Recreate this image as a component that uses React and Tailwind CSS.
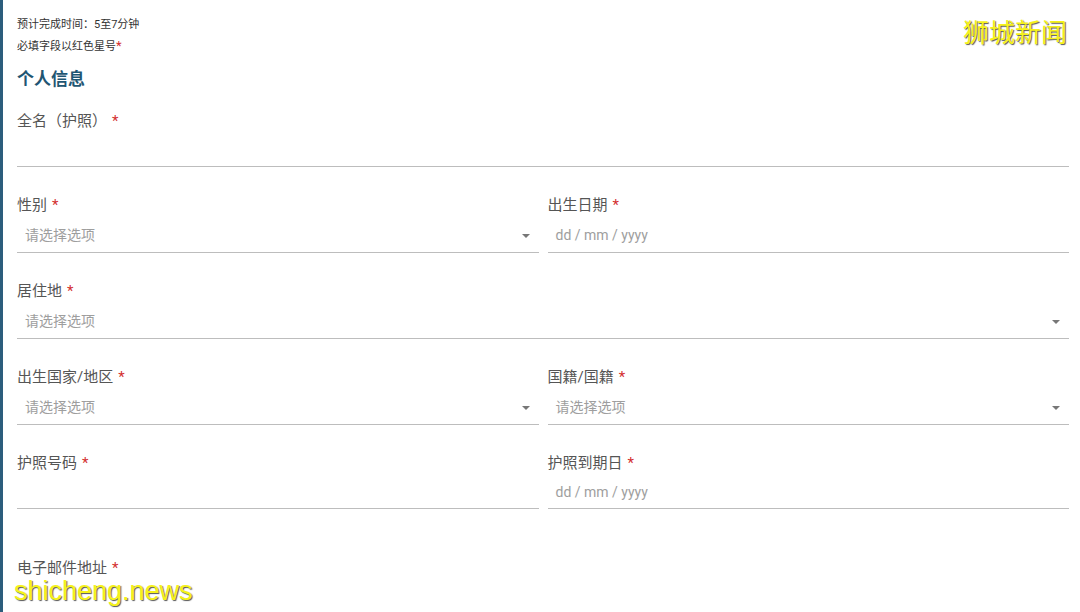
import React from 'react';

const font = { fontFamily: 'Roboto, "Noto Sans CJK SC", sans-serif' };

const Star = () => <span className="text-[#d32f2f] ml-[5px]">*</span>;

const Arrow = () => (
    <span className="w-0 h-0 border-l-[4px] border-r-[4px] border-t-[4px] border-l-transparent border-r-transparent border-t-[#777]" />
);

const Field = ({ label, placeholder, select, short, className = '' }) => (
    <div className={className}>
        <div className="h-5 flex items-center text-[15px] text-[#555] leading-5">
            {label}<Star />
        </div>
        <div className={`mt-1 ${short ? 'h-[32px]' : 'h-[34px]'} border-b border-[#bdbdbd] flex items-center justify-between pl-[8px] pr-[9px]`}>
            <span className="text-[14px] text-[#9e9e9e]">{placeholder}</span>
            {select && <Arrow />}
        </div>
    </div>
);

const App = () => {
    return (
        <div className="w-[1080px] h-[612px] bg-white overflow-hidden relative border-l-[3px] border-[#2c5d7c]" style={font}>
            <div className="pl-[14px] pr-[11px] pt-[17px]">
                {/* Header */}
                <p className="text-[11px] text-[#333] leading-4">预计完成时间：5至7分钟</p>
                <p className="text-[11px] text-[#333] leading-4 mt-[5px]">必填字段以红色星号<span className="text-[#d32f2f] text-[13px]">*</span></p>
                <h2 className="text-[17px] font-bold text-[#1f5673] mt-[12px] leading-6">个人信息</h2>

                <div className="mt-[20px] space-y-[28px]">
                    <Field label="全名（护照）" placeholder="" short />
                    <div className="grid grid-cols-2 gap-[9px]">
                        <Field label="性别" placeholder="请选择选项" select />
                        <Field label="出生日期" placeholder="dd / mm / yyyy" />
                    </div>
                    <Field label="居住地" placeholder="请选择选项" select />
                    <div className="grid grid-cols-2 gap-[9px]">
                        <Field label="出生国家/地区" placeholder="请选择选项" select />
                        <Field label="国籍/国籍" placeholder="请选择选项" select />
                    </div>
                    <div className="grid grid-cols-2 gap-[9px]">
                        <Field label="护照号码" placeholder="" short />
                        <Field label="护照到期日" placeholder="dd / mm / yyyy" short />
                    </div>
                </div>

                <div className="mt-[49px] h-5 flex items-center text-[15px] text-[#555]">
                    电子邮件地址<Star />
                </div>
            </div>

            {/* Watermarks */}
            <div className="absolute top-[15px] right-[13px] text-[26px] text-[#f6f21a] leading-8 [text-shadow:1px_1px_1px_#555]"
                style={{ fontFamily: '"Noto Sans CJK SC", sans-serif' }}>
                狮城新闻
            </div>
            <div className="absolute left-[11px] bottom-[3px] text-[27px] text-[#f6f21a] leading-9 [text-shadow:1px_1px_1px_#555]"
                style={{ fontFamily: '"Liberation Sans", sans-serif' }}>
                shicheng.news
            </div>
        </div>
    );
};

export default App;
